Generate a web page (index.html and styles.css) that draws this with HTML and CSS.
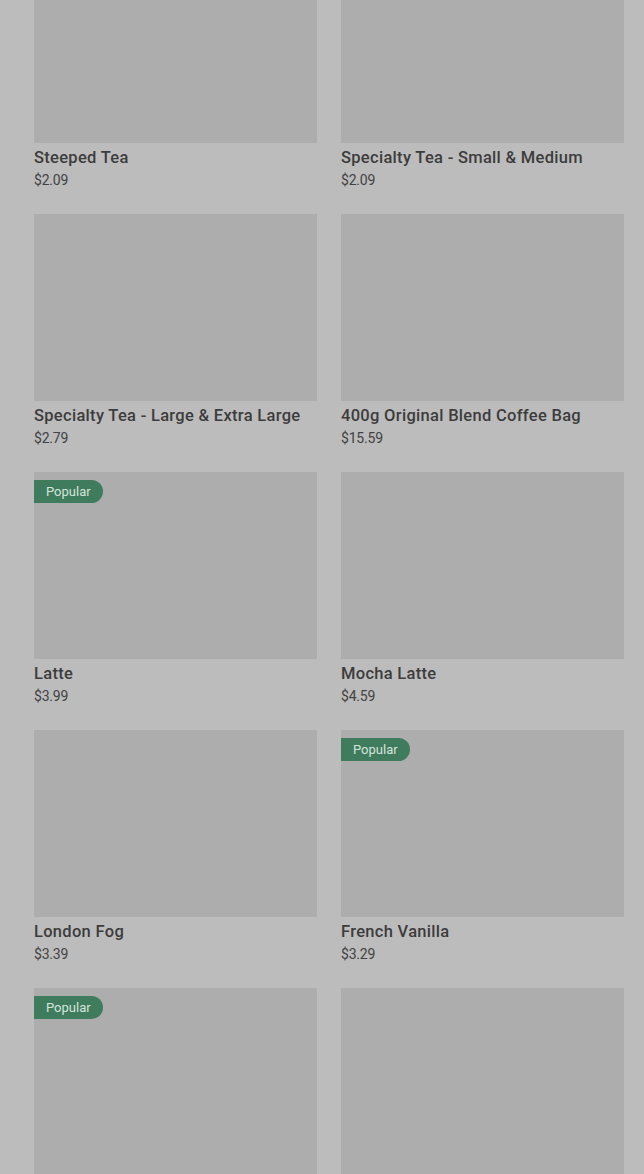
FILE: index.html
```html
<!DOCTYPE html>
<html lang="en">
<head>
<meta charset="utf-8">
<title>Menu</title>
<link rel="stylesheet" href="styles.css">
</head>
<body>
<main class="grid">
  <article class="card"><div class="thumb"></div><h3 class="name">Steeped Tea</h3><p class="price">$2.09</p></article>
  <article class="card"><div class="thumb"></div><h3 class="name">Specialty Tea - Small &amp; Medium</h3><p class="price">$2.09</p></article>
  <article class="card"><div class="thumb"></div><h3 class="name">Specialty Tea - Large &amp; Extra Large</h3><p class="price">$2.79</p></article>
  <article class="card"><div class="thumb"></div><h3 class="name">400g Original Blend Coffee Bag</h3><p class="price">$15.59</p></article>
  <article class="card"><div class="thumb"><span class="badge">Popular</span></div><h3 class="name">Latte</h3><p class="price">$3.99</p></article>
  <article class="card"><div class="thumb"></div><h3 class="name">Mocha Latte</h3><p class="price">$4.59</p></article>
  <article class="card"><div class="thumb"></div><h3 class="name">London Fog</h3><p class="price">$3.39</p></article>
  <article class="card"><div class="thumb"><span class="badge">Popular</span></div><h3 class="name">French Vanilla</h3><p class="price">$3.29</p></article>
  <article class="card"><div class="thumb"><span class="badge">Popular</span></div></article>
  <article class="card"><div class="thumb"></div></article>
</main>
</body>
</html>
```

FILE: styles.css
```css
html, body {
  margin: 0;
  padding: 0;
  background: #bcbcbc;
  overflow: hidden;
}

body {
  font-family: Roboto, "Liberation Sans", sans-serif;
  color: #363636;
}

.grid {
  display: grid;
  grid-template-columns: 283px 283px;
  column-gap: 24px;
  row-gap: 24px;
  padding: 0 20px 0 34px;
  margin-top: -44px;
}

.card {
  display: flex;
  flex-direction: column;
  min-height: 234px;
}

.thumb {
  position: relative;
  height: 187px;
  background: #adadad;
}

.badge {
  position: absolute;
  top: 8px;
  left: 0;
  height: 23px;
  line-height: 23px;
  padding: 0 12px;
  border-radius: 0 12px 12px 0;
  background: #3e7c5d;
  color: #d6e4dc;
  font-size: 13px;
}

.name {
  margin: 4px 0 0;
  font-size: 16.5px;
  line-height: 22px;
  font-weight: 500;
  letter-spacing: 0.3px;
  color: #3c3c3c;
  white-space: nowrap;
}

.price {
  margin: 1px 0 0;
  font-size: 14px;
  line-height: 20px;
  color: #424242;
  letter-spacing: -0.2px;
}
```
